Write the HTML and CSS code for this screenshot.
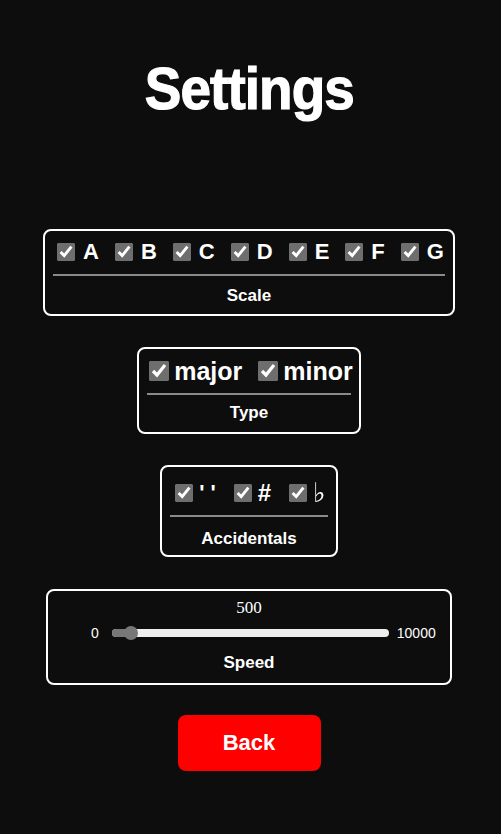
FILE: index.html
```html
<!DOCTYPE html>
<html>
<head>
<meta charset="utf-8">
<link rel="stylesheet" href="styles.css">
</head>
<body>
<div class="page">
  <h1 class="title">Settings</h1>

  <div class="box scale">
    <div class="opts">
      <label class="opt"><input type="checkbox" checked><span>A</span></label>
      <label class="opt"><input type="checkbox" checked><span>B</span></label>
      <label class="opt"><input type="checkbox" checked><span>C</span></label>
      <label class="opt"><input type="checkbox" checked><span>D</span></label>
      <label class="opt"><input type="checkbox" checked><span>E</span></label>
      <label class="opt"><input type="checkbox" checked><span>F</span></label>
      <label class="opt"><input type="checkbox" checked><span>G</span></label>
    </div>
    <div class="rule"></div>
    <div class="caption">Scale</div>
  </div>

  <div class="box type">
    <div class="opts">
      <label class="opt"><input type="checkbox" checked><span>major</span></label>
      <label class="opt"><input type="checkbox" checked><span>minor</span></label>
    </div>
    <div class="rule"></div>
    <div class="caption">Type</div>
  </div>

  <div class="box acc">
    <div class="opts">
      <label class="opt"><input type="checkbox" checked><span>' '</span></label>
      <label class="opt"><input type="checkbox" checked><span class="sharp">#</span></label>
      <label class="opt"><input type="checkbox" checked><span class="flat">♭</span></label>
    </div>
    <div class="rule"></div>
    <div class="caption">Accidentals</div>
  </div>

  <div class="box speed">
    <div class="value">500</div>
    <div class="slider-row">
      <span class="lim lo">0</span>
      <div class="track"><div class="fill" style="width:19px"></div><div class="thumb" style="left:19px"></div></div>
      <span class="lim hi">10000</span>
    </div>
    <div class="caption">Speed</div>
  </div>

  <button class="back">Back</button>
</div>
</body>
</html>
```

FILE: styles.css
```css
html, body {
  margin: 0;
  padding: 0;
  background: #0d0d0d;
  color: #fff;
  font-family: "Liberation Sans", Arial, sans-serif;
}
.page {
  display: flex;
  flex-direction: column;
  align-items: center;
  padding: 51px 3px 0 0;
}
.title {
  margin: 0 0 102px;
  font-size: 59px;
  font-weight: 700;
  letter-spacing: -1px;
  line-height: 76px;
  transform: scaleX(0.93);
  -webkit-text-stroke: 1.2px #fff;
}
.box {
  border: 2px solid #fff;
  border-radius: 8px;
  display: flex;
  flex-direction: column;
  align-items: center;
  box-sizing: border-box;
}
.opts {
  display: flex;
  align-items: center;
  white-space: nowrap;
}
.opt {
  display: flex;
  align-items: center;
  flex-shrink: 0;
  font-weight: 700;
}
.opt input {
  margin: 0;
  flex-shrink: 0;
  width: 18px;
  height: 18px;
  accent-color: #6e6e6e;
}
.rule {
  height: 2px;
  background: #8a8a8a;
  align-self: stretch;
}
.caption {
  font-weight: 700;
  font-size: 17px;
  line-height: 20px;
}
.scale {
  width: 412px;
  height: 87px;
  padding: 9px 8px 0;
  margin-bottom: 31px;
}
.scale .opts { gap: 16px; height: 24px; padding-left: 3px; }
.scale .opt { font-size: 22px; gap: 8px; }
.scale .rule { margin: 10px 0 10px; }
.type {
  width: 224px;
  height: 87px;
  padding: 9px 8px 0;
  margin-bottom: 31px;
}
.type .opts { gap: 16px; height: 26px; padding-left: 4px; }
.type .opt { font-size: 25px; gap: 5px; }
.type .opt input { width: 20px; height: 20px; }
.type .rule { margin: 9px 0 8px; }
.acc {
  width: 178px;
  height: 92px;
  padding: 14px 8px 0;
  margin-bottom: 32px;
}
.acc .opts { gap: 18px; height: 24px; padding-left: 3px; }
.acc .opt { font-size: 22px; gap: 6px; }
.acc .sharp { font-size: 24px; }
.acc .flat {
  font-family: "DejaVu Sans", sans-serif;
  font-weight: 400;
  font-size: 27px;
  line-height: 24px;
  color: #fff;
  filter: grayscale(1) brightness(5);
}
.acc .rule { margin: 10px 0 12px; }
.speed {
  width: 406px;
  height: 96px;
  padding: 8px 8px 0;
  margin-bottom: 30px;
}
.value {
  font-family: "Liberation Serif", serif;
  font-size: 17px;
  height: 18px;
  line-height: 18px;
}
.slider-row {
  display: flex;
  align-items: center;
  align-self: flex-start;
  margin: 8px 0 0 35px;
  height: 16px;
  font-size: 14px;
}
.lo { margin-right: 13px; }
.hi { margin-left: 8px; }
.track {
  position: relative;
  width: 277px;
  height: 8px;
  background: #efefef;
  border-radius: 4px;
}
.fill {
  position: absolute;
  left: 0; top: 0; bottom: 0;
  background: #777;
  border-radius: 4px;
}
.thumb {
  position: absolute;
  top: 50%;
  width: 14px;
  height: 14px;
  margin-left: -7px;
  transform: translateY(-50%);
  background: #777;
  border-radius: 50%;
}
.speed .caption { margin-top: 12px; }
.back {
  width: 143px;
  height: 56px;
  border: none;
  border-radius: 8px;
  background: #ff0000;
  color: #fff;
  font-family: "Liberation Sans", Arial, sans-serif;
  font-weight: 700;
  font-size: 22px;
}
```
